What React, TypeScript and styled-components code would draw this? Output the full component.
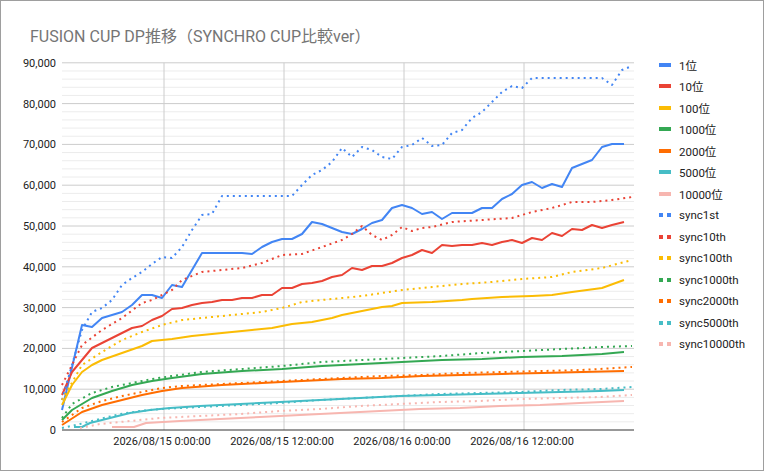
import React from "react";
import styled, { createGlobalStyle } from "styled-components";

const Global = createGlobalStyle`
  html, body { margin: 0; padding: 0; background: #fff; }
  body { font-family: Roboto, "Noto Sans CJK JP", sans-serif; }
`;

const Frame = styled.div`
  width: 764px; height: 471px; box-sizing: border-box;
  border: 1px solid #9e9e9e; background: #fff; overflow: hidden;
  display: flex; flex-direction: column;
`;
const Title = styled.div`
  height: 49px; padding: 22px 0 0 29px; box-sizing: border-box;
  font-size: 16px; color: #757575; font-family: Roboto, "Noto Sans CJK JP", sans-serif;
`;
const Body = styled.div`display: flex; flex: 1;`;
const Chart = styled.svg`display: block; flex: none;`;
const Legend = styled.div`
  display: flex; flex-direction: column; gap: 0; padding: 4px 0 0 18px;
`;
const Item = styled.div`
  height: 21.5px; display: flex; align-items: center; gap: 8px;
  font-size: 11.5px; color: #222; font-family: Roboto, "Noto Sans CJK JP", sans-serif;
`;
const Swatch = styled.span<{ $c: string; $dot?: boolean }>`
  width: 12px; height: 4px; flex: none;
  background: ${(p) => p.$dot ? `linear-gradient(90deg, ${p.$c} 0 4px, transparent 4px 8px, ${p.$c} 8px 12px)` : p.$c};
`;

type S = { name: string; c: string; dot?: boolean; pts: number[][] };
const C = { b: "#4285f4", r: "#ea4335", y: "#fbbc04", g: "#34a853", o: "#ff6d01", t: "#46bdc6", p: "#f7b6b0" };

const series: S[] = [
  { name: "1位", c: C.b, pts: [[62,410],[82,325],[92,327],[102,318],[112,315],[122,312],[132,305],[142,295],[152,295],[162,298],[172,285],[182,287],[202,253],[212,253],[222,253],[232,253],[242,253],[252,254],[262,247],[272,242],[282,239],[292,239],[302,234],[312,222],[322,224],[332,228],[342,232],[352,234],[362,229],[372,223],[382,220],[392,208],[402,205],[412,208],[422,214],[432,212],[442,219],[452,213],[462,213],[472,213],[482,208],[492,208],[502,199],[512,194],[522,185],[532,182],[542,188],[552,184],[562,187],[572,168],[582,164],[592,160],[602,147],[612,144],[624,144]] },
  { name: "10位", c: C.r, pts: [[62,395],[72,372],[92,348],[102,343],[112,338],[122,333],[132,328],[142,326],[152,320],[162,316],[172,309],[182,308],[192,305],[202,303],[212,302],[222,300],[232,300],[242,298],[252,298],[262,295],[272,295],[282,288],[292,288],[302,284],[312,283],[322,281],[332,277],[342,275],[352,268],[362,270],[372,266],[382,266],[392,263],[402,258],[412,255],[422,250],[432,253],[442,245],[452,246],[462,245],[472,245],[482,243],[492,245],[502,242],[512,240],[522,243],[532,238],[542,240],[552,233],[562,236],[572,229],[582,230],[592,225],[602,228],[612,225],[624,222]] },
  { name: "100位", c: C.y, pts: [[62,405],[72,385],[82,372],[92,365],[102,360],[122,353],[142,346],[152,341],[172,339],[192,336],[212,334],[232,332],[252,330],[272,328],[282,326],[292,324],[312,322],[322,320],[332,318],[342,315],[352,313],[362,311],[372,309],[382,307],[392,306],[402,303],[432,302],[462,300],[472,299],[502,297],[532,296],[552,295],[572,292],[602,288],[624,280]] },
  { name: "1000位", c: C.g, pts: [[62,420],[72,410],[92,398],[112,391],[132,385],[152,381],[172,378],[202,374],[242,371],[282,369],[322,366],[362,364],[402,362],[442,360],[482,359],[522,357],[562,356],[602,354],[624,352]] },
  { name: "2000位", c: C.o, pts: [[62,425],[82,412],[102,405],[122,400],[142,395],[162,391],[182,388],[222,385],[262,383],[302,381],[342,379],[382,378],[422,376],[462,375],[502,374],[542,373],[582,372],[624,371]] },
  { name: "5000位", c: C.t, pts: [[74,427],[82,427],[90,423],[110,418],[130,413],[150,410],[170,408],[200,406],[240,404],[280,402],[320,400],[360,398],[400,396],[440,395],[480,394],[520,393],[560,392],[600,391],[624,390]] },
  { name: "10000位", c: C.p, pts: [[112,427],[134,427],[146,423],[180,421],[220,419],[260,417],[300,415],[340,413],[380,411],[420,409],[460,408],[500,406],[540,405],[580,403],[624,401]] },
  { name: "sync1st", c: C.b, dot: true, pts: [[62,400],[82,330],[92,312],[102,308],[112,300],[122,285],[132,278],[142,272],[152,264],[162,257],[172,258],[182,247],[192,230],[202,215],[212,214],[222,196],[232,196],[242,196],[292,196],[302,185],[312,175],[322,170],[332,162],[342,148],[352,157],[362,147],[372,150],[382,157],[392,159],[402,147],[412,145],[422,138],[432,146],[442,145],[452,133],[462,130],[472,118],[482,112],[492,102],[502,92],[512,86],[522,88],[532,78],[542,78],[602,78],[612,85],[622,70],[632,66]] },
  { name: "sync10th", c: C.r, dot: true, pts: [[62,385],[82,345],[102,330],[122,318],[142,303],[152,300],[172,290],[182,280],[202,272],[222,270],[242,268],[262,263],[282,255],[302,254],[322,247],[342,240],[352,234],[362,226],[372,235],[382,240],[392,235],[402,227],[412,231],[422,228],[432,227],[452,222],[482,220],[512,218],[532,212],[552,208],[572,202],[592,202],[612,200],[632,197]] },
  { name: "sync100th", c: C.y, dot: true, pts: [[62,400],[82,365],[102,352],[122,340],[142,332],[162,325],[182,320],[202,318],[222,316],[242,314],[262,312],[282,308],[302,302],[322,300],[342,298],[362,296],[382,293],[402,290],[432,287],[462,284],[492,282],[522,279],[552,277],[572,272],[602,268],[632,260]] },
  { name: "sync1000th", c: C.g, dot: true, pts: [[62,418],[72,404],[92,393],[112,387],[132,383],[152,379],[172,376],[202,372],[242,369],[282,366],[322,362],[362,360],[402,358],[442,356],[482,353],[522,351],[562,349],[602,347],[632,346]] },
  { name: "sync2000th", c: C.o, dot: true, pts: [[62,422],[82,408],[102,401],[122,396],[142,392],[162,388],[182,386],[222,384],[262,382],[302,380],[342,378],[382,376],[422,375],[462,373],[502,372],[542,371],[582,370],[632,367]] },
  { name: "sync5000th", c: C.t, dot: true, pts: [[62,428],[80,424],[100,419],[120,414],[140,411],[160,409],[200,407],[240,405],[280,403],[320,400],[360,398],[400,396],[440,394],[480,393],[520,392],[560,390],[600,389],[632,387]] },
  { name: "sync10000th", c: C.p, dot: true, pts: [[80,428],[100,424],[130,421],[160,418],[200,416],[240,414],[280,411],[320,409],[360,406],[400,404],[440,402],[480,401],[520,399],[560,398],[600,397],[632,395]] },
];

const Y0 = 430, STEP = 40.8;
const minor = Array.from({ length: 46 }, (_, i) => i);
const xs = [164, 284, 404, 524];
const xl = ["2026/08/15 0:00:00", "2026/08/15 12:00:00", "2026/08/16 0:00:00", "2026/08/16 12:00:00"];

export default function App() {
  return (
    <>
      <Global />
      <Frame>
        <Title>FUSION CUP DP推移（SYNCHRO CUP比較ver）</Title>
        <Body>
          <Chart width={640} height={420} viewBox="1 50 640 420">
            {minor.map((i) => i % 5 !== 0 && (
              <line key={i} x1={62} x2={634} y1={Y0 - (i * STEP) / 5} y2={Y0 - (i * STEP) / 5} stroke="#ececec" strokeWidth={1} />
            ))}
            {Array.from({ length: 9 }, (_, i) => i + 1).map((i) => (
              <line key={"M" + i} x1={62} x2={634} y1={Y0 - i * STEP} y2={Y0 - i * STEP} stroke="#cccccc" />
            ))}
            {xs.map((x) => <line key={x} x1={x} x2={x} y1={Y0 - 9 * STEP} y2={Y0} stroke="#cccccc" />)}
            {Array.from({ length: 10 }, (_, i) => i).map((i) => (
              <text key={"t" + i} x={56} y={Y0 - i * STEP + 4} textAnchor="end" fontSize={11} fill="#222" fontFamily="Roboto, sans-serif">
                {i === 0 ? "0" : `${i * 10},000`}
              </text>
            ))}
            {xs.map((x, i) => (
              <text key={"x" + i} x={x - 2} y={445} textAnchor="middle" fontSize={11} fill="#222" fontFamily="Roboto, sans-serif">{xl[i]}</text>
            ))}
            {series.map((s) => (
              <polyline key={s.name} points={s.pts.map((p) => p.join(",")).join(" ")} fill="none" stroke={s.c}
                strokeWidth={2} strokeDasharray={s.dot ? "2 4" : undefined} strokeLinejoin="round" />
            ))}
            <line x1={62} x2={634} y1={Y0} y2={Y0} stroke="#333" strokeWidth={1} />
          </Chart>
          <Legend>
            {series.map((s) => (
              <Item key={s.name}><Swatch $c={s.c} $dot={s.dot} />{s.name}</Item>
            ))}
          </Legend>
        </Body>
      </Frame>
    </>
  );
}
